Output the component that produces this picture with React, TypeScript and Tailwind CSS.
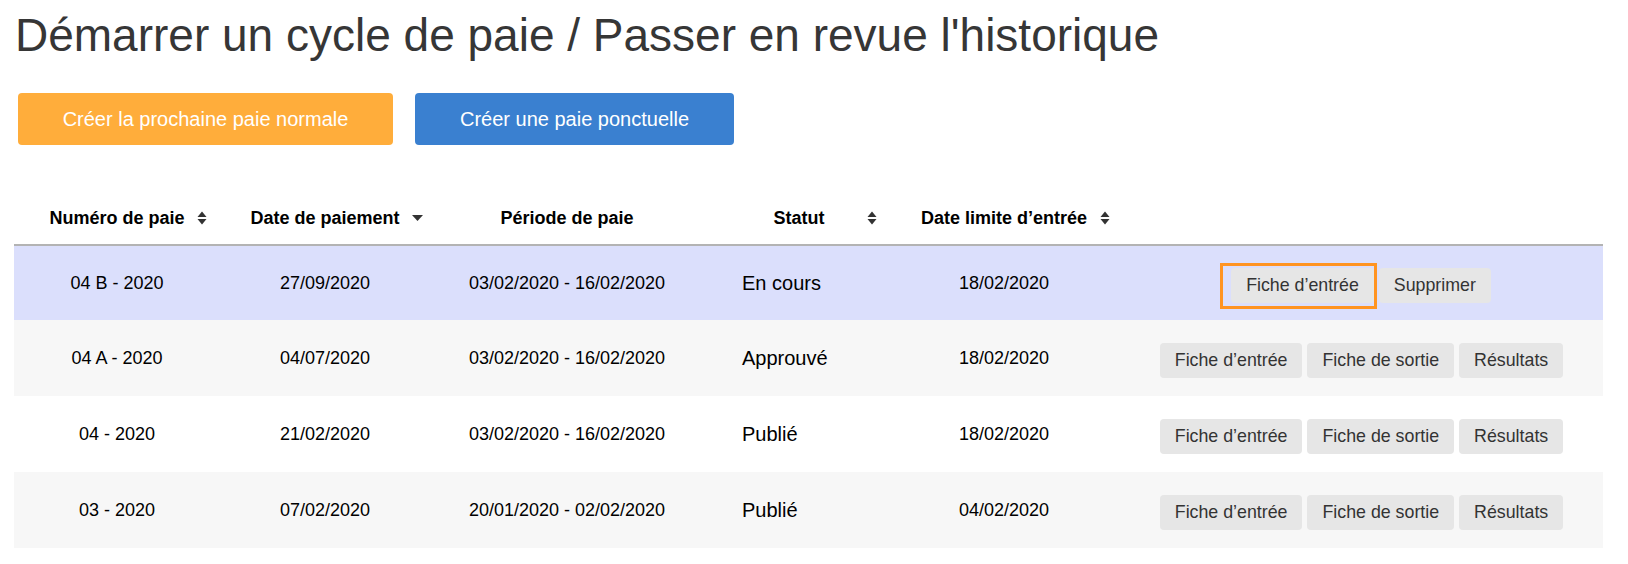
import React from "react";

const SortBoth = () => (
  <svg width="10" height="14" viewBox="0 0 10 14" className="block">
    <path d="M5 0.5 L9.5 6 L0.5 6 Z" fill="#333" />
    <path d="M5 13.5 L9.5 8 L0.5 8 Z" fill="#333" />
  </svg>
);

const SortDown = () => (
  <svg width="11" height="7" viewBox="0 0 11 7" className="block">
    <path d="M0 0.5 L11 0.5 L5.5 6.5 Z" fill="#333" />
  </svg>
);

type Row = {
  num: string;
  pay: string;
  period: string;
  status: string;
  limit: string;
  actions: string[];
  current?: boolean;
  bg: string;
  h: string;
};

const rows: Row[] = [
  {
    num: "04 B - 2020",
    pay: "27/09/2020",
    period: "03/02/2020 - 16/02/2020",
    status: "En cours",
    limit: "18/02/2020",
    actions: ["Fiche d’entrée", "Supprimer"],
    current: true,
    bg: "bg-[#dbdffc]",
    h: "h-[74px]",
  },
  {
    num: "04 A - 2020",
    pay: "04/07/2020",
    period: "03/02/2020 - 16/02/2020",
    status: "Approuvé",
    limit: "18/02/2020",
    actions: ["Fiche d’entrée", "Fiche de sortie", "Résultats"],
    bg: "bg-[#f7f7f7]",
    h: "h-[76px]",
  },
  {
    num: "04 - 2020",
    pay: "21/02/2020",
    period: "03/02/2020 - 16/02/2020",
    status: "Publié",
    limit: "18/02/2020",
    actions: ["Fiche d’entrée", "Fiche de sortie", "Résultats"],
    bg: "bg-white",
    h: "h-[76px]",
  },
  {
    num: "03 - 2020",
    pay: "07/02/2020",
    period: "20/01/2020 - 02/02/2020",
    status: "Publié",
    limit: "04/02/2020",
    actions: ["Fiche d’entrée", "Fiche de sortie", "Résultats"],
    bg: "bg-[#f7f7f7]",
    h: "h-[76px]",
  },
];

const grid = "grid grid-cols-[206px_210px_274px_184px_232px_483px]";

const GrayBtn = ({ label }: { label: string }) => (
  <button className="h-[35px] px-[15px] rounded-[4px] bg-[#e6e6e6] text-[#333] text-[17.8px] leading-[35px] whitespace-nowrap">
    {label}
  </button>
);

export default function App() {
  return (
    <div
      className="w-[1628px] h-[564px] bg-white pl-[14px] pt-[12px] text-black"
      style={{ fontFamily: '"Liberation Sans", Arial, Helvetica, sans-serif' }}
    >
      <h1 className="text-[46px] leading-[46px] text-[#363636] pl-[1px]">
        Démarrer un cycle de paie / Passer en revue l'historique
      </h1>

      <div className="flex gap-[22px] mt-[35px] pl-[4px]">
        <button className="w-[375px] h-[52px] rounded-[4px] bg-[#ffad3b] text-white text-[20px]">
          Créer la prochaine paie normale
        </button>
        <button className="w-[319px] h-[52px] rounded-[4px] bg-[#3a80d0] text-white text-[20px]">
          Créer une paie ponctuelle
        </button>
      </div>

      <div className="mt-[47px] w-[1589px]">
        <div className={`${grid} h-[54px] border-b-2 border-[#b3b3b3] items-center font-bold text-[18px]`}>
          <div className="flex justify-center">
            <span className="relative">
              Numéro de paie
              <span className="absolute left-full ml-[12px] top-1/2 -translate-y-1/2">
                <SortBoth />
              </span>
            </span>
          </div>
          <div className="flex justify-center">
            <span className="relative">
              Date de paiement
              <span className="absolute left-full ml-[12px] top-1/2 -translate-y-1/2">
                <SortDown />
              </span>
            </span>
          </div>
          <div className="flex justify-center">Période de paie</div>
          <div className="relative flex justify-center pl-[6px]">
            Statut
            <span className="absolute right-[11px] top-1/2 -translate-y-1/2">
              <SortBoth />
            </span>
          </div>
          <div className="flex justify-center">
            <span className="relative">
              Date limite d’entrée
              <span className="absolute left-full ml-[13px] top-1/2 -translate-y-1/2">
                <SortBoth />
              </span>
            </span>
          </div>
          <div />
        </div>

        {rows.map((r, i) => (
          <div key={i} className={`${grid} ${r.bg} ${r.h} items-center text-[18px]`}>
            <div className="text-center">{r.num}</div>
            <div className="text-center">{r.pay}</div>
            <div className="text-center">{r.period}</div>
            <div className="pl-[38px] text-[20px]">{r.status}</div>
            <div className="text-center">{r.limit}</div>
            <div className="flex justify-center items-center gap-[5px] pt-[4px]">
              {r.current ? (
                <div className="flex items-center mr-[12px] pt-[2px]">
                  <div className="border-[3px] border-[#ff9422] pl-[8px] pt-[2px] pb-[3px] flex">
                    <GrayBtn label={r.actions[0]} />
                  </div>
                  <div className="ml-[2px] -mt-[2px]">
                    <GrayBtn label={r.actions[1]} />
                  </div>
                </div>
              ) : (
                r.actions.map((a) => <GrayBtn key={a} label={a} />)
              )}
            </div>
          </div>
        ))}
      </div>
    </div>
  );
}
